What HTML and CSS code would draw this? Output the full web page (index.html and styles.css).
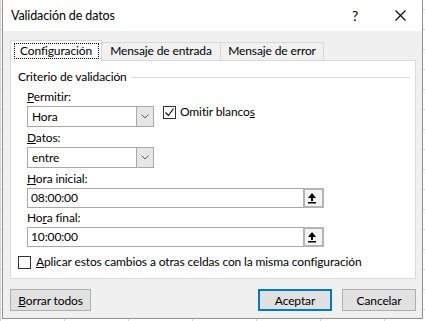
FILE: index.html
```html
<!DOCTYPE html>
<html lang="es">
<head>
    <meta charset="UTF-8">
    <title>Validación de datos</title>
    <link rel="stylesheet" href="styles.css">
</head>
<body>
    <div class="dialog">
        <div class="titlebar">
            <span class="title">Validación de datos</span>
            <span class="help">?</span>
            <span class="close">
                <svg width="11" height="11" viewBox="0 0 11 11"><path d="M0.5 0.5 L10.5 10.5 M10.5 0.5 L0.5 10.5" stroke="#000" stroke-width="1.1" fill="none"/></svg>
            </span>
        </div>

        <div class="content">
            <div class="tabs">
                <div class="tab active"><span class="focus">Configuración</span></div>
                <div class="tab tab-entry">Mensaje de entrada</div>
                <div class="tab tab-error">Mensaje de error</div>
            </div>

            <div class="panel">
                <div class="group-title">
                    <span>Criterio de validación</span>
                    <span class="rule"></span>
                </div>

                <div class="fields">
                    <label class="lbl"><u>P</u>ermitir:</label>
                    <div class="row">
                        <div class="combo">
                            <span class="value">Hora</span>
                            <span class="drop">
                                <svg width="8" height="5" viewBox="0 0 8 5"><path d="M0.5 0.5 L4 4 L7.5 0.5" stroke="#606060" stroke-width="1" fill="none"/></svg>
                            </span>
                        </div>
                        <div class="check omit">
                            <span class="box">
                                <svg width="11" height="11" viewBox="0 0 11 11"><path d="M1.5 5.5 L4.5 8.5 L9.5 1.5" stroke="#000" stroke-width="1.1" fill="none"/></svg>
                            </span>
                            <span>Omitir blanco<u>s</u></span>
                        </div>
                    </div>

                    <label class="lbl gap"><u>D</u>atos:</label>
                    <div class="combo">
                        <span class="value">entre</span>
                        <span class="drop">
                            <svg width="8" height="5" viewBox="0 0 8 5"><path d="M0.5 0.5 L4 4 L7.5 0.5" stroke="#606060" stroke-width="1" fill="none"/></svg>
                        </span>
                    </div>

                    <label class="lbl gap"><u>H</u>ora inicial:</label>
                    <div class="ref-input">
                        <span class="value">08:00:00</span>
                        <span class="ref-btn">
                            <svg width="17" height="17" viewBox="0 0 17 17"><path d="M7 3 L3 8 L6 8 L6 11 L8 11 L8 8 L11 8 Z M3 12 L11 12 L11 13.5 L3 13.5 Z" fill="#000"/></svg>
                        </span>
                    </div>

                    <label class="lbl gap-small">Ho<u>r</u>a final:</label>
                    <div class="ref-input">
                        <span class="value">10:00:00</span>
                        <span class="ref-btn">
                            <svg width="17" height="17" viewBox="0 0 17 17"><path d="M7 3 L3 8 L6 8 L6 11 L8 11 L8 8 L11 8 Z M3 12 L11 12 L11 13.5 L3 13.5 Z" fill="#000"/></svg>
                        </span>
                    </div>
                </div>

                <div class="check apply">
                    <span class="box"></span>
                    <span><u>A</u>plicar estos cambios a otras celdas con la misma configuración</span>
                </div>
            </div>

            <div class="buttons">
                <button class="btn clear"><u>B</u>orrar todos</button>
                <button class="btn ok">Aceptar</button>
                <button class="btn cancel">Cancelar</button>
            </div>
        </div>
    </div>
</body>
</html>
```

FILE: styles.css
```css
body {
    margin: 0;
    width: 425px;
    height: 321px;
    overflow: hidden;
    font-family: Lato, "Noto Sans", sans-serif;
    font-size: 12px;
    line-height: 16px;
    letter-spacing: -0.12px;
    color: #000;
    background-color: #fff;
    background-image:
        linear-gradient(#d4d4d4 1px, transparent 1px),
        linear-gradient(90deg, #d4d4d4 1px, transparent 1px);
    background-size: 64px 20px;
    background-position: 0 9px;
}
.dialog {
    box-sizing: border-box;
    width: 421px;
    height: 319px;
    margin-left: 2px;
    border: 1px solid #8f8f8f;
    border-top: 0;
    background: #f0f0f0;
    display: flex;
    flex-direction: column;
}
.titlebar {
    height: 31px;
    background: #fff;
    display: flex;
    align-items: center;
    padding: 0 7px 0 8px;
}
.title {
    flex: 1;
    font-size: 12.5px;
}
.help {
    width: 20px;
    text-align: center;
    font-size: 14px;
}
.close {
    width: 30px;
    margin-left: 20px;
    display: flex;
    justify-content: center;
}
.content {
    padding: 9px 6px 0 7px;
}
.tabs {
    display: flex;
    align-items: flex-end;
    height: 20px;
}
.tab {
    box-sizing: border-box;
    height: 18px;
    border: 1px solid #d9d9d9;
    border-bottom: 0;
    background: #f0f0f0;
    text-align: center;
    line-height: 16px;
    margin-left: -1px;
}
.tab.active {
    position: relative;
    z-index: 1;
    width: 92px;
    height: 21px;
    margin: 0 0 -1px 0;
    background: #fff;
    padding-top: 2px;
}
.focus {
    display: inline-block;
    width: 85px;
    height: 16px;
    line-height: 14px;
    border: 1px dotted #000;
    box-sizing: border-box;
}
.tab-entry {
    width: 120px;
}
.tab-error {
    width: 104px;
}
.panel {
    box-sizing: border-box;
    height: 219px;
    border: 1px solid #d9d9d9;
    background: #fff;
    padding-top: 8px;
}
.group-title {
    display: flex;
    align-items: center;
    padding: 0 5px 0 7px;
}
.rule {
    flex: 1;
    height: 1px;
    background: #dcdcdc;
    margin: 0 0 0 4px;
}
.fields {
    padding: 4px 0 0 16px;
    display: flex;
    flex-direction: column;
    align-items: flex-start;
}
.lbl {
    display: block;
    margin-bottom: 1px;
}
.lbl.gap {
    margin-top: 3px;
}
.lbl.gap-small {
    margin-top: 2px;
}
.row {
    display: flex;
    align-items: flex-start;
}
.combo {
    box-sizing: border-box;
    width: 127px;
    height: 21px;
    border: 1px solid #a8a8a8;
    display: flex;
}
.combo .value {
    flex: 1;
    padding-left: 4px;
    line-height: 19px;
}
.drop {
    width: 16px;
    border-left: 1px solid #a8a8a8;
    background: #e6e6e6;
    display: flex;
    align-items: center;
    justify-content: center;
}
.check {
    display: flex;
    align-items: center;
}
.box {
    box-sizing: border-box;
    width: 13px;
    height: 13px;
    border: 1px solid #333;
    background: #fff;
    display: flex;
    align-items: center;
    justify-content: center;
}
.omit {
    margin-left: 9px;
    margin-top: -2px;
}
.omit .box {
    margin-right: 4px;
}
.ref-input {
    box-sizing: border-box;
    width: 297px;
    height: 20px;
    border: 1px solid #a8a8a8;
    display: flex;
}
.ref-input .value {
    flex: 1;
    padding-left: 3px;
    line-height: 18px;
}
.ref-btn {
    box-sizing: border-box;
    width: 21px;
    height: 20px;
    margin: -1px -1px 0 0;
    border: 2px solid #b4b4b4;
    background: #f4f4f4;
    display: flex;
    align-items: center;
    justify-content: center;
}
.apply {
    margin: 7px 0 0 7px;
}
.apply .box {
    margin-right: 5px;
}
.buttons {
    display: flex;
    margin-top: 10px;
}
.btn {
    box-sizing: border-box;
    height: 22px;
    padding: 0;
    border: 1px solid #adadad;
    background: #e1e1e1;
    font-family: inherit;
    font-size: 12px;
    letter-spacing: -0.12px;
    color: #000;
}
.clear {
    width: 81px;
    margin-left: 0;
}
.ok {
    width: 74px;
    margin-left: auto;
    border: 2px solid #0078d7;
}
.cancel {
    width: 74px;
    margin-left: 10px;
}
```
